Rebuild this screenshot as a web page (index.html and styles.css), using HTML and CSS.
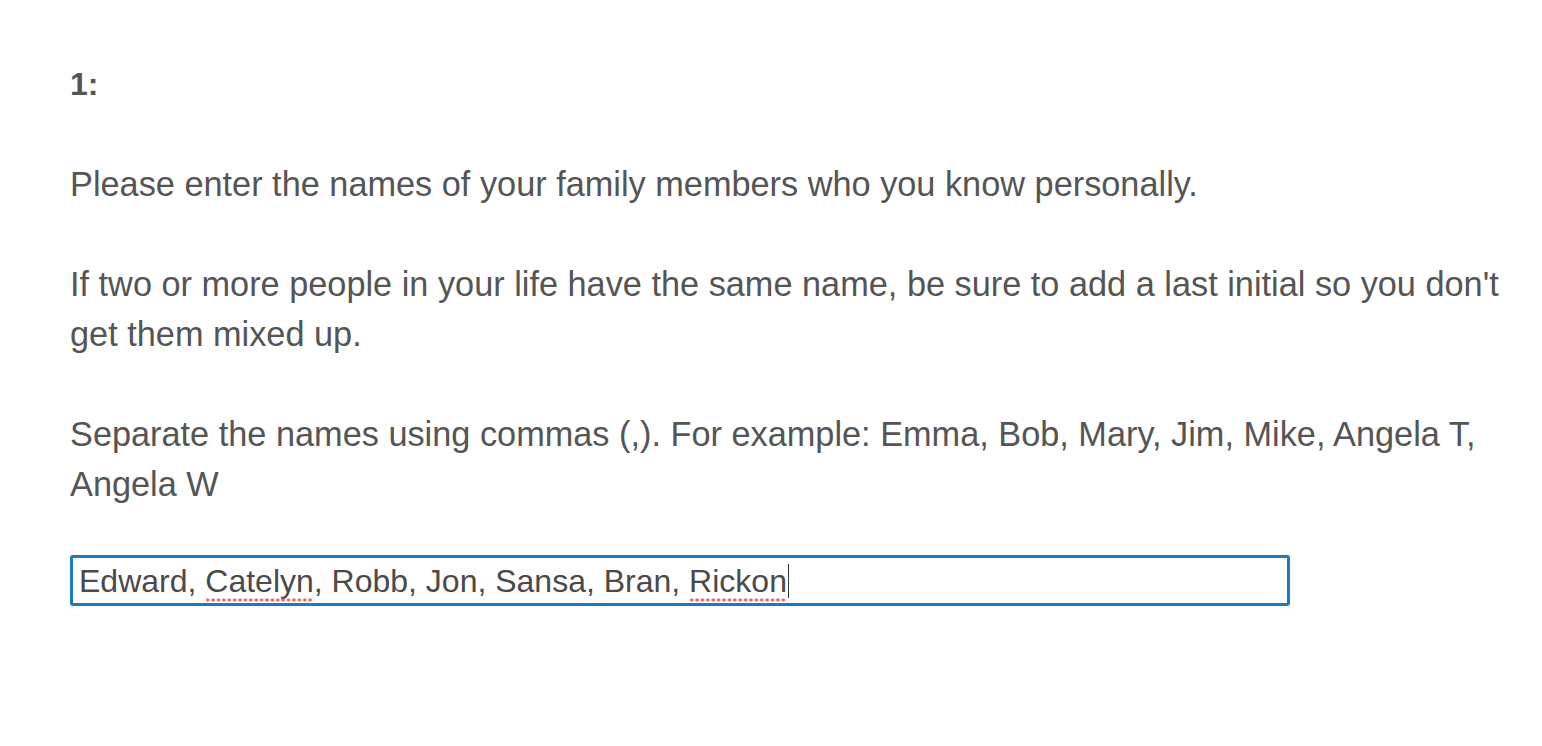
FILE: index.html
```html
<!DOCTYPE html>
<html>
<head>
<meta charset="utf-8">
<link rel="stylesheet" href="styles.css">
</head>
<body>
<div class="page">
  <div class="qnum">1:</div>
  <p class="para">Please enter the names of your family members who you know personally.</p>
  <p class="para">If two or more people in your life have the same name, be sure to add a last initial so you don't get them mixed up.</p>
  <p class="para">Separate the names using commas (,). For example: Emma, Bob, Mary, Jim, Mike, Angela T, Angela W</p>
  <div class="field">Edward, <span class="misspelled">Catelyn</span>, Robb, Jon, Sansa, Bran, <span class="misspelled">Rickon</span><span class="caret"></span></div>
</div>
</body>
</html>
```
FILE: styles.css
```css
html, body {
  margin: 0;
  padding: 0;
  background: #ffffff;
}
.page {
  padding: 59px 30px 0 70px;
  font-family: "Liberation Sans", Arial, sans-serif;
  color: #555555;
  font-size: 34.3px;
  line-height: 50px;
}
.qnum {
  font-weight: bold;
  font-size: 32px;
  margin-bottom: 50px;
}
.para {
  margin: 0 0 50px 0;
}
.field {
  box-sizing: border-box;
  width: 1220px;
  height: 51px;
  margin-top: -4px;
  border: 3px solid #1a7bc4;
  border-radius: 3px;
  padding: 0 0 0 6px;
  font-size: 32px;
  line-height: 44px;
  color: #4a4a4a;
  display: flex;
  align-items: center;
  white-space: pre;
}
.misspelled {
  position: relative;
}
.misspelled::after {
  content: "";
  position: absolute;
  left: 0;
  right: 0;
  bottom: 1px;
  height: 4px;
  background-image: radial-gradient(circle, #f26363 1.4px, transparent 1.8px);
  background-size: 5.4px 4px;
  background-repeat: repeat-x;
}
.caret {
  display: inline-block;
  width: 1px;
  height: 34px;
  background: #333333;
  margin-left: 1px;
}
```
